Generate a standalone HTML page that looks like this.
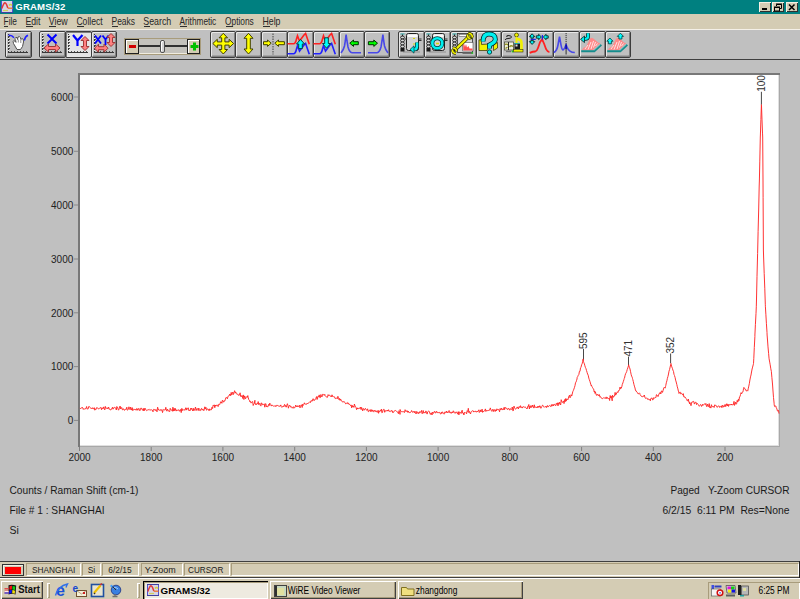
<!DOCTYPE html>
<html><head><meta charset="utf-8">
<style>
*{margin:0;padding:0;box-sizing:border-box}
html,body{width:800px;height:599px;overflow:hidden}
body{position:relative;background:#c0c0c0;font-family:"Liberation Sans",sans-serif;color:#000}
.a{position:absolute}
.t{position:absolute;white-space:pre;font-size:11px;line-height:11px}
#title{left:0;top:0;width:800px;height:14px;background:#008080}
#menu{left:0;top:14px;width:800px;height:15px;background:#d4ccb4}
#tbar{left:0;top:29px;width:800px;height:31px;background:#c0c0c0;border-top:1px solid #f4f0e8;border-bottom:1px solid #404040}
.btn{position:absolute;top:31px;width:27px;height:27px;border:1px solid #3c3c3c;border-radius:2px;background:#c0c0c0;box-shadow:inset 1px 1px 0 #e8e8e8,inset -1px -1px 0 #808080,inset 0 -2px 0 #a4a4a4}
.btn svg{position:absolute;left:0;top:0}
.btn.on{background:#e4e4e4;box-shadow:inset 1px 1px 0 #808080}
.tb{position:absolute;top:2px;width:12px;height:10px;background:#d4ccb4;box-shadow:inset 1px 1px 0 #f4f0e4,inset -1px -1px 0 #303030}
#status{left:0;top:561px;width:800px;height:17px;background:#d4ccb4;border-top:1px solid #404040;border-bottom:1px solid #404040}
.pan{position:absolute;top:1px;height:13px;border-top:1px solid #a89c7c;border-left:1px solid #a89c7c;border-bottom:1px solid #fff;border-right:1px solid #fff;font-size:11px;line-height:11px;text-align:center;color:#222}
#task{left:0;top:578px;width:800px;height:21px;background:#d4ccb4;border-top:1px solid #fff}
.tk{position:absolute;top:2px;height:18px;background:#d4ccb4;box-shadow:inset 1px 1px 0 #fff,inset -1px -1px 0 #404040,inset -2px -2px 0 #a89c7c;font-size:11px;line-height:11px}
</style></head><body>
<!-- title bar -->
<div class="a" id="title">
  <svg class="a" style="left:1px;top:1px" width="13" height="13" viewBox="0 0 13 13">
    <rect x="0" y="0" width="12" height="12" fill="#d8d4e4"/><path d="M0.5 0V12M11.5 0V12" stroke="#5050d0"/><path d="M0 11.5H12" stroke="#4040a0"/>
    <path d="M2 9.5H7" stroke="#d0d060" stroke-width="1.2"/><path d="M8 4.5 Q9.5 2.5 11 4.5" fill="none" stroke="#d8d040" stroke-width="1.6"/>
    <path d="M0.8 7.5 Q3 1 4.3 1.8 Q5.5 2.5 6.8 7" fill="none" stroke="#e03838" stroke-width="1.5"/><path d="M6.8 7.2 H11.5" stroke="#f07028" stroke-width="1.3"/>
  </svg>
  <svg class="a" style="left:0;top:0" width="100" height="14" font-family="Liberation Sans"><text x="15.3" y="10.2" font-size="9.6" font-weight="bold" fill="#fff" textLength="50" lengthAdjust="spacing">GRAMS/32</text></svg>
  <div class="tb" style="left:759px"><div class="a" style="left:3px;top:6px;width:5px;height:2px;background:#000"></div></div>
  <div class="tb" style="left:772px"><svg class="a" style="left:0;top:0" width="12" height="10"><path d="M4.5 4V2.5H9.5V6.5H8" fill="none" stroke="#000" stroke-width="1"/><path d="M4 2H10" stroke="#000" stroke-width="1"/><rect x="2.5" y="5.5" width="5" height="3.5" fill="none" stroke="#000" stroke-width="1"/><path d="M2 5H8" stroke="#000"/></svg></div>
  <div class="tb" style="left:786px"><svg class="a" style="left:0;top:0" width="12" height="10"><path d="M3 2.5L8.5 8M8.5 2.5L3 8" stroke="#000" stroke-width="1.5"/></svg></div>
</div>
<!-- menu -->
<div class="a" id="menu">
<svg class="a" style="left:0;top:0" width="800" height="15" font-family="Liberation Sans">
<text x="3.5999999999999996" y="11" font-size="10.5" text-anchor="start" fill="#262626" font-weight="normal" textLength="13.4" lengthAdjust="spacingAndGlyphs" xml:space="preserve" >File</text>
<rect x="4" y="12" width="4" height="1" fill="#303030"/>
<text x="25.4" y="11" font-size="10.5" text-anchor="start" fill="#262626" font-weight="normal" textLength="15" lengthAdjust="spacingAndGlyphs" xml:space="preserve" >Edit</text>
<rect x="26" y="12" width="7" height="1" fill="#303030"/>
<text x="48.7" y="11" font-size="10.5" text-anchor="start" fill="#262626" font-weight="normal" textLength="19" lengthAdjust="spacingAndGlyphs" xml:space="preserve" >View</text>
<rect x="49" y="12" width="7" height="1" fill="#303030"/>
<text x="76.4" y="11" font-size="10.5" text-anchor="start" fill="#262626" font-weight="normal" textLength="26.3" lengthAdjust="spacingAndGlyphs" xml:space="preserve" >Collect</text>
<rect x="77" y="12" width="7" height="1" fill="#303030"/>
<text x="111.5" y="11" font-size="10.5" text-anchor="start" fill="#262626" font-weight="normal" textLength="23.5" lengthAdjust="spacingAndGlyphs" xml:space="preserve" >Peaks</text>
<rect x="112" y="12" width="6" height="1" fill="#303030"/>
<text x="143.25" y="11" font-size="10.5" text-anchor="start" fill="#262626" font-weight="normal" textLength="28" lengthAdjust="spacingAndGlyphs" xml:space="preserve" >Search</text>
<rect x="144" y="12" width="6" height="1" fill="#303030"/>
<text x="179.5" y="11" font-size="10.5" text-anchor="start" fill="#262626" font-weight="normal" textLength="36.75" lengthAdjust="spacingAndGlyphs" xml:space="preserve" >Arithmetic</text>
<rect x="180" y="12" width="7" height="1" fill="#303030"/>
<text x="225.0" y="11" font-size="10.5" text-anchor="start" fill="#262626" font-weight="normal" textLength="28.75" lengthAdjust="spacingAndGlyphs" xml:space="preserve" >Options</text>
<rect x="226" y="12" width="7" height="1" fill="#303030"/>
<text x="262.5" y="11" font-size="10.5" text-anchor="start" fill="#262626" font-weight="normal" textLength="18" lengthAdjust="spacingAndGlyphs" xml:space="preserve" >Help</text>
<rect x="263" y="12" width="7" height="1" fill="#303030"/>
</svg>
</div>
<!-- toolbar -->
<div class="a" id="tbar"></div>
<div class="btn" style="left:5px;width:27px"><svg class="a" style="left:-1px;top:-1px" width="26" height="27" viewBox="0 0 26 27"><path d="M3.5 3V22M3 21.5H23" stroke="#383838" stroke-width="1"/><path d="M4 5.5h1M4 8.5h1M4 11.5h1M4 14.5h1M4 17.5h1" stroke="#505050" stroke-width="1"/><path d="M6.5 20v1M9.5 20v1M12.5 20v1M15.5 20v1M18.5 20v1M21.5 20v1" stroke="#505050" stroke-width="1"/><path d="M3.5 4V22" stroke="#f0f0f0" stroke-width="1" stroke-dasharray="1 2"/><path d="M3.5 4.3 Q7 4 9 6.8 M19.3 9.5 Q20 5.5 23 4.3" fill="none" stroke="#2020ff" stroke-width="1.5"/><path d="M8.5 12.5 Q7.5 10 9 9.5 L10.5 11 L10 7.5 Q10.5 6 12 6.5 L12.5 8.5 L13 6 Q14.5 5 15.5 6.5 L15.8 8.5 Q17 7 18.2 8 L18.5 11 L17.5 15.5 L15.5 18.5 L12 18.5 Z" fill="#fff" stroke="#505050" stroke-width="1"/><path d="M11 9.5V12M13.3 8.5V11.5M15.8 9V12" stroke="#707070" stroke-width="0.8"/></svg></div>
<div class="btn" style="left:39px;width:27px"><svg class="a" style="left:-1px;top:-1px" width="26" height="27" viewBox="0 0 26 27"><path d="M3.5 3V22M3 21.5H23" stroke="#383838" stroke-width="1"/><path d="M4 5.5h1M4 8.5h1M4 11.5h1M4 14.5h1M4 17.5h1" stroke="#505050" stroke-width="1"/><path d="M6.5 20v1M9.5 20v1M12.5 20v1M15.5 20v1M18.5 20v1M21.5 20v1" stroke="#505050" stroke-width="1"/><path d="M3.5 4V22" stroke="#f0f0f0" stroke-width="1" stroke-dasharray="1 2"/><path d="M8.5 3.5L17.5 12.5M17.5 3.5L8.5 12.5" stroke="#0000ff" stroke-width="2"/><polygon points="5.0,17.0 9.5,13.0 9.5,15.5 16.5,15.5 16.5,13.0 21.0,17.0 16.5,21.0 16.5,18.5 9.5,18.5 9.5,21.0" fill="#ff8080" stroke="#a03838" stroke-width="1" stroke-linejoin="miter"/></svg></div>
<div class="btn on" style="left:65px;width:27px"><svg class="a" style="left:-1px;top:-1px" width="26" height="27" viewBox="0 0 26 27"><path d="M3.5 3V22M3 21.5H23" stroke="#383838" stroke-width="1"/><path d="M4 5.5h1M4 8.5h1M4 11.5h1M4 14.5h1M4 17.5h1" stroke="#505050" stroke-width="1"/><path d="M6.5 20v1M9.5 20v1M12.5 20v1M15.5 20v1M18.5 20v1M21.5 20v1" stroke="#505050" stroke-width="1"/><path d="M3.5 4V22" stroke="#f0f0f0" stroke-width="1" stroke-dasharray="1 2"/><path d="M8 4L12.5 9.5L17.5 4M12.5 9.5V15" fill="none" stroke="#0000ff" stroke-width="2.2"/><polygon points="20.0,5.5 16.0,9.5 18.5,9.5 18.5,15.5 16.0,15.5 20.0,19.5 24.0,15.5 21.5,15.5 21.5,9.5 24.0,9.5" fill="#ff8080" stroke="#a03838" stroke-width="1"/></svg></div>
<div class="btn" style="left:91px;width:26px"><svg class="a" style="left:-1px;top:-1px" width="26" height="27" viewBox="0 0 26 27"><path d="M3.5 3V22M3 21.5H23" stroke="#383838" stroke-width="1"/><path d="M4 5.5h1M4 8.5h1M4 11.5h1M4 14.5h1M4 17.5h1" stroke="#505050" stroke-width="1"/><path d="M6.5 20v1M9.5 20v1M12.5 20v1M15.5 20v1M18.5 20v1M21.5 20v1" stroke="#505050" stroke-width="1"/><path d="M3.5 4V22" stroke="#f0f0f0" stroke-width="1" stroke-dasharray="1 2"/><path d="M4 4.5L10 12.5M10 4.5L4 12.5M11.5 4.5L14.5 8.5L17.5 4.5M14.5 8.5V14" fill="none" stroke="#0000ff" stroke-width="1.8"/><polygon points="20.0,2.5 16.0,6.5 18.5,6.5 18.5,11.5 16.0,11.5 20.0,15.5 24.0,11.5 21.5,11.5 21.5,6.5 24.0,6.5" fill="#ff8080" stroke="#a03838" stroke-width="1"/><polygon points="3.5,17.2 7.5,13.2 7.5,15.7 13.0,15.7 13.0,13.2 17.0,17.2 13.0,21.2 13.0,18.7 7.5,18.7 7.5,21.2" fill="#ff8080" stroke="#a03838" stroke-width="1" stroke-linejoin="miter"/></svg></div>
<div class="btn" style="left:210px;width:26px"><svg class="a" style="left:-1px;top:-1px" width="26" height="27" viewBox="0 0 26 27"><polygon points="13.3,2.3 17.5,6.8 14.9,6.8 14.9,10.9 19.1,10.9 19.1,8.3 23.6,12.5 19.1,16.7 19.1,14.1 14.9,14.1 14.9,18.5 17.5,18.5 13.3,23.0 9.1,18.5 11.7,18.5 11.7,14.1 7.3,14.1 7.3,16.7 2.8,12.5 7.3,8.3 7.3,10.9 11.7,10.9 11.7,6.8 9.1,6.8" fill="#ffff00" stroke="#404000" stroke-width="1"/></svg></div>
<div class="btn" style="left:235px;width:27px"><svg class="a" style="left:-1px;top:-1px" width="26" height="27" viewBox="0 0 26 27"><polygon points="13.5,2.3 9.0,7.3 11.7,7.3 11.7,18.0 9.0,18.0 13.5,23.0 18.0,18.0 15.3,18.0 15.3,7.3 18.0,7.3" fill="#ffff00" stroke="#404000" stroke-width="1"/></svg></div>
<div class="btn" style="left:261px;width:27px"><svg class="a" style="left:-1px;top:-1px" width="26" height="27" viewBox="0 0 26 27"><path d="M12 2.5V23.5" stroke="#404040" stroke-width="1" stroke-dasharray="1.5 1"/><polygon points="2.5,10.7 6.5,10.7 6.5,9.0 10.2,12.2 6.5,15.4 6.5,13.7 2.5,13.7" fill="#ffff00" stroke="#404000" stroke-width="1"/><polygon points="23.4,10.7 17.5,10.7 17.5,9.0 13.8,12.2 17.5,15.4 17.5,13.7 23.4,13.7" fill="#ffff00" stroke="#404000" stroke-width="1"/></svg></div>
<div class="btn" style="left:287px;width:27px"><svg class="a" style="left:-1px;top:-1px" width="26" height="27" viewBox="0 0 26 27"><path d="M0.5 12.8H6.5 Q8.5 12.8 9.5 8 L10.5 4.7 L12.5 10 L17 4 L18.6 2.4 L20.5 8 L22.3 13.2" fill="none" stroke="#ff2020" stroke-width="1.6"/><path d="M0.5 22.8H6.5 Q8.5 22.8 9.5 18 L10.5 14.7 L12.5 20 L17 14 L18.6 12.4 L20.5 18 L22.3 23.2" fill="none" stroke="#2020ff" stroke-width="1.6"/><polygon points="13.5,8.5 17.6,13.0 15.3,13.0 15.3,17.6 11.7,17.6 11.7,13.0 9.5,13.0" fill="#00ffff" stroke="#004040" stroke-width="1"/></svg></div>
<div class="btn" style="left:313px;width:27px"><svg class="a" style="left:-1px;top:-1px" width="26" height="27" viewBox="0 0 26 27"><path d="M0.5 12.8H6.5 Q8.5 12.8 9.5 8 L10.5 4.7 L12.5 10 L17 4 L18.6 2.4 L20.5 8 L22.3 13.2" fill="none" stroke="#ff2020" stroke-width="1.6"/><path d="M0.5 22.8H6.5 Q8.5 22.8 9.5 18 L10.5 14.7 L12.5 20 L17 14 L18.6 12.4 L20.5 18 L22.3 23.2" fill="none" stroke="#2020ff" stroke-width="1.6"/><polygon points="13.5,17.2 17.6,12.5 15.3,12.5 15.3,6.8 11.7,6.8 11.7,12.5 9.5,12.5" fill="#00ffff" stroke="#004040" stroke-width="1"/></svg></div>
<div class="btn" style="left:339px;width:26px"><svg class="a" style="left:-1px;top:-1px" width="26" height="27" viewBox="0 0 26 27"><path d="M2 22 Q4.5 19 5.5 15 L6.3 10 L7.1 3.7 L8 10 L9 16 Q10.5 21.5 13 21.8 H22" fill="none" stroke="#4848e8" stroke-width="1.6"/><polygon points="10.8,12.2 14.5,9.0 14.5,10.7 19.3,10.7 19.3,13.7 14.5,13.7 14.5,15.4" fill="#00ff00" stroke="#003000" stroke-width="1"/></svg></div>
<div class="btn" style="left:364px;width:26px"><svg class="a" style="left:-1px;top:-1px" width="26" height="27" viewBox="0 0 26 27"><path d="M24 22 Q21.5 19 20.5 15 L19.7 10 L18.9 3.7 L18 10 L17 16 Q15.5 21.5 13 21.8 H4" fill="none" stroke="#4848e8" stroke-width="1.6"/><polygon points="13.5,12.2 9.8,9.0 9.8,10.7 4.4,10.7 4.4,13.7 9.8,13.7 9.8,15.4" fill="#00ff00" stroke="#003000" stroke-width="1"/></svg></div>
<div class="btn" style="left:398px;width:27px"><svg class="a" style="left:-1px;top:-1px" width="26" height="27" viewBox="0 0 26 27"><rect x="5" y="20" width="17" height="2" fill="#a8a8a8"/><path d="M2.5 3h4" stroke="#40b0b0" stroke-width="1.2"/><path d="M4.5 3.5V20" stroke="#202020" stroke-width="1"/><ellipse cx="4.5" cy="6.5" rx="1.9" ry="1.4" fill="#d8d8d8" stroke="#202020" stroke-width="0.9"/><ellipse cx="4.5" cy="9.5" rx="1.9" ry="1.4" fill="#d8d8d8" stroke="#202020" stroke-width="0.9"/><ellipse cx="4.5" cy="12.5" rx="1.9" ry="1.4" fill="#d8d8d8" stroke="#202020" stroke-width="0.9"/><ellipse cx="4.5" cy="15.5" rx="1.9" ry="1.4" fill="#d8d8d8" stroke="#202020" stroke-width="0.9"/><rect x="2.5" y="17" width="4" height="3.5" fill="#181818"/><rect x="8.5" y="2.5" width="12" height="17" rx="2" fill="#d4d4d4" stroke="#202020"/><rect x="9.5" y="3.5" width="10" height="2.5" fill="#fafafa"/><path d="M6.5 8h2M20.5 8h3M20.5 9.5h3" stroke="#303030"/><path d="M15 7.5h2M15 13h2" stroke="#d8d800" stroke-width="1.2"/><path d="M19 11.5 V15.5 Q19 18.5 15.5 18.5" fill="none" stroke="#003838" stroke-width="3.8"/><path d="M19 11.5 V15.5 Q19 18.5 15.5 18.5" fill="none" stroke="#00f0f0" stroke-width="2.4"/><polygon points="12,18.5 16,14.8 16,22.2" fill="#00f0f0" stroke="#003838" stroke-width="0.7"/></svg></div>
<div class="btn" style="left:424px;width:27px"><svg class="a" style="left:-1px;top:-1px" width="26" height="27" viewBox="0 0 26 27"><rect x="5" y="20" width="17" height="2" fill="#a8a8a8"/><path d="M2.5 3h4" stroke="#40b0b0" stroke-width="1.2"/><path d="M4.5 3.5V20" stroke="#202020" stroke-width="1"/><ellipse cx="4.5" cy="6.5" rx="1.9" ry="1.4" fill="#d8d8d8" stroke="#202020" stroke-width="0.9"/><ellipse cx="4.5" cy="9.5" rx="1.9" ry="1.4" fill="#d8d8d8" stroke="#202020" stroke-width="0.9"/><ellipse cx="4.5" cy="12.5" rx="1.9" ry="1.4" fill="#d8d8d8" stroke="#202020" stroke-width="0.9"/><ellipse cx="4.5" cy="15.5" rx="1.9" ry="1.4" fill="#d8d8d8" stroke="#202020" stroke-width="0.9"/><rect x="2.5" y="17" width="4" height="3.5" fill="#181818"/><rect x="8.5" y="2.5" width="12" height="17" rx="2" fill="#d4d4d4" stroke="#202020"/><rect x="9.5" y="3.5" width="10" height="2.5" fill="#fafafa"/><path d="M6.5 8h2M20.5 8h3M20.5 9.5h3" stroke="#303030"/><circle cx="13.3" cy="12.3" r="5" fill="none" stroke="#003838" stroke-width="4"/><circle cx="13.3" cy="12.3" r="5" fill="none" stroke="#00f0f0" stroke-width="2.6"/><path d="M12 12.5h3" stroke="#d8d800" stroke-width="1.5"/></svg></div>
<div class="btn" style="left:450px;width:27px"><svg class="a" style="left:-1px;top:-1px" width="26" height="27" viewBox="0 0 26 27"><path d="M2.5 3h4" stroke="#40b0b0" stroke-width="1.2"/><path d="M4.5 3.5V20" stroke="#202020" stroke-width="1"/><ellipse cx="4.5" cy="6.5" rx="1.9" ry="1.4" fill="#d8d8d8" stroke="#202020" stroke-width="0.9"/><ellipse cx="4.5" cy="9.5" rx="1.9" ry="1.4" fill="#d8d8d8" stroke="#202020" stroke-width="0.9"/><ellipse cx="4.5" cy="12.5" rx="1.9" ry="1.4" fill="#d8d8d8" stroke="#202020" stroke-width="0.9"/><ellipse cx="4.5" cy="15.5" rx="1.9" ry="1.4" fill="#d8d8d8" stroke="#202020" stroke-width="0.9"/><rect x="2.5" y="17" width="4" height="3.5" fill="#181818"/><rect x="7.5" y="2.5" width="15" height="19" fill="#d8d8d8" stroke="#303030" stroke-width="0.8"/><rect x="9" y="3.5" width="9" height="2" fill="#fafafa" stroke="#404040" stroke-width="0.5"/><rect x="12.7" y="11.5" width="10.3" height="8.5" fill="#fff" stroke="#505050" stroke-width="0.6"/><path d="M13.2 19.5 V13.5 L14 12.5 L15 16 L16 13 L17 16.5 L18.5 15 L19.5 17.5 L22.5 17.5 V19.5 Z" fill="#ff5050"/><rect x="12.5" y="21.5" width="9.5" height="1.5" fill="#707070"/><circle cx="22.3" cy="22" r="0.9" fill="#20c020"/><path d="M5 19 L19.5 5" stroke="#3a3a00" stroke-width="3.6"/><path d="M5 19 L19.5 5" stroke="#f4f400" stroke-width="2.2"/><path d="M17.5 3.5 Q17.5 7.5 20.5 7.5 M19.5 2.5 L18 4 M21.8 6 L20.5 7.5 M18.5 2.5 Q22 2 22.5 6.5" fill="none" stroke="#3a3a00" stroke-width="2.8"/><path d="M17.5 3.5 Q17.5 7.5 20.5 7.5 M18.5 2.5 Q22 2 22.5 6.5" fill="none" stroke="#f4f400" stroke-width="1.6"/><path d="M3 17 Q6.5 17 6.5 20.5 M2.5 18.5 Q2 22 6 22.5" fill="none" stroke="#3a3a00" stroke-width="2.8"/><path d="M3 17 Q6.5 17 6.5 20.5 M2.5 18.5 Q2 22 6 22.5" fill="none" stroke="#f4f400" stroke-width="1.6"/></svg></div>
<div class="btn" style="left:476px;width:26px"><svg class="a" style="left:-1px;top:-1px" width="26" height="27" viewBox="0 0 26 27"><polygon points="3,9 5.5,8.5 5.5,13.5 13,13 11,19.5 3,19.5" fill="#f0f000" stroke="#303000" stroke-width="0.7"/><polygon points="17.5,14 21.5,11.5 21.5,17 17.5,19.5" fill="#f0f000" stroke="#303000" stroke-width="0.7"/><path d="M7 10.5 Q7 3 13 3 Q19.5 3 19.3 8.5 Q19 11.5 13.5 14 V17.5" fill="none" stroke="#002828" stroke-width="5"/><path d="M7 10.5 Q7 3 13 3 Q19.5 3 19.3 8.5 Q19 11.5 13.5 14 V17.5" fill="none" stroke="#00f0f0" stroke-width="3.4"/><circle cx="13.5" cy="21" r="2.2" fill="#00f0f0" stroke="#002828" stroke-width="0.8"/></svg></div>
<div class="btn" style="left:501px;width:27px"><svg class="a" style="left:-1px;top:-1px" width="26" height="27" viewBox="0 0 26 27"><path d="M6 6 Q5 4.5 7 4.5 Q10.5 4.5 10.5 6 Q10.5 7.5 7 7.5 Q4.5 7.5 4 9" fill="none" stroke="#202020" stroke-width="1"/><rect x="3.5" y="11" width="9" height="8" fill="#f0f0e0" stroke="#505040" stroke-width="0.8"/><path d="M4 13.5 Q6 12.5 7 14 M8.5 16 Q10 14 12 15.5 M4.5 17.5 L6.5 16" stroke="#909020" stroke-width="1.4" fill="none"/><path d="M7.5 11V19" stroke="#202020" stroke-width="1"/><rect x="5" y="20" width="5" height="1.2" fill="#707070"/><circle cx="15.5" cy="4" r="2" fill="#f0f000" stroke="#303000" stroke-width="0.7"/><path d="M15.5 6 V12" stroke="#f0f000" stroke-width="2"/><path d="M15.5 8 Q20.5 8 20.5 12 V19" fill="none" stroke="#f0f000" stroke-width="2.6"/><rect x="13.5" y="12.5" width="5.5" height="5.5" fill="#181818"/><rect x="14.5" y="13.5" width="2" height="2" fill="#e0e0e0"/><path d="M13 12.5h6" stroke="#20a0a0" stroke-width="1"/><rect x="12.5" y="18.5" width="9.5" height="2.5" fill="#f0f000" stroke="#303000" stroke-width="0.6"/><circle cx="11.5" cy="20.5" r="0.9" fill="#20c020"/></svg></div>
<div class="btn" style="left:527px;width:27px"><svg class="a" style="left:-1px;top:-1px" width="26" height="27" viewBox="0 0 26 27"><path d="M2.7 21.9 Q6 20.5 8.3 20.5 Q10 20 11.1 16.8 L13 11.1 L15.1 8.3 L17.2 13 L19.1 18.2 Q20.5 21 22.4 21" fill="none" stroke="#ff2020" stroke-width="1.8"/><path d="M15.4 4V8.5M3.7 8.3H8.8" stroke="#2020f0" stroke-width="1.3"/><polygon points="5.1,2.8 7.8,5.6 6.3,5.6 6.3,7.2 3.9,7.2 3.9,5.6 2.4,5.6" fill="#00f0f0" stroke="#002828" stroke-width="0.9"/><polygon points="5.1,13.4 7.8,10.6 6.3,10.6 6.3,9.4 3.9,9.4 3.9,10.6 2.4,10.6" fill="#00f0f0" stroke="#002828" stroke-width="0.9"/><polygon points="14.4,6.0 11.6,3.3 11.6,4.8 9.3,4.8 9.3,7.2 11.6,7.2 11.6,8.7" fill="#00f0f0" stroke="#002828" stroke-width="0.9"/><polygon points="16.3,6.0 19.1,3.3 19.1,4.8 21.2,4.8 21.2,7.2 19.1,7.2 19.1,8.7" fill="#00f0f0" stroke="#002828" stroke-width="0.9"/></svg></div>
<div class="btn" style="left:553px;width:27px"><svg class="a" style="left:-1px;top:-1px" width="26" height="27" viewBox="0 0 26 27"><path d="M13.1 2V13" stroke="#303030" stroke-width="1" stroke-dasharray="1.2 0.8"/><path d="M13.1 13V23.5" stroke="#303030" stroke-width="1"/><path d="M0.8 21.5 Q4 20 5 14 L6.5 5.7 L8 14 Q9 19 10 19 Q11.5 18.5 12.5 15 L13.1 13.9 L14 16 Q16 21.5 21.8 21.5" fill="none" stroke="#4848e8" stroke-width="1.6"/><path d="M13.1 13.5V18" stroke="#0000a0" stroke-width="1.4"/></svg></div>
<div class="btn" style="left:579px;width:27px"><svg class="a" style="left:-1px;top:-1px" width="26" height="27" viewBox="0 0 26 27"><polygon points="2.5,18.8 5,16.5 7,15.5 9,12 11,7.5 13,6.8 15,8 17,9.7 19,11.5 21.5,12.5 19,14 16,17 14,19" fill="#ff8a8a"/><path d="M6 18 L9 14 M9 18.5 L12 11 M12 18 L14.5 10 M14.5 16.5 L16.5 11 M16.5 15 L18.5 12.5" stroke="#ffe4e4" stroke-width="1"/><path d="M2.2 20.3H15.3L22.3 13.8" fill="none" stroke="#168c8c" stroke-width="2"/><path d="M15 19.3 L21.5 13.3" stroke="#80d0d0" stroke-width="0.7"/><path d="M9 2.3 V5.5 Q9 7.9 6 7.9 H5" fill="none" stroke="#002828" stroke-width="3.8"/><path d="M9 2.3 V5.5 Q9 7.9 6 7.9 H5" fill="none" stroke="#00f0f0" stroke-width="2.4"/><polygon points="1.5,8.3 5.5,5 5.5,11.6" fill="#00f0f0" stroke="#002828" stroke-width="0.8"/></svg></div>
<div class="btn" style="left:605px;width:26px"><svg class="a" style="left:-1px;top:-1px" width="26" height="27" viewBox="0 0 26 27"><polygon points="2.5,18.8 5,16.5 7,15.5 9,12 11,7.5 13,6.8 15,8 17,9.7 19,11.5 21.5,12.5 19,14 16,17 14,19" fill="#ff8a8a"/><path d="M6 18 L9 14 M9 18.5 L12 11 M12 18 L14.5 10 M14.5 16.5 L16.5 11 M16.5 15 L18.5 12.5" stroke="#ffe4e4" stroke-width="1"/><path d="M2.2 20.3H15.3L22.3 13.8" fill="none" stroke="#168c8c" stroke-width="2"/><path d="M15 19.3 L21.5 13.3" stroke="#80d0d0" stroke-width="0.7"/><polygon points="4.9,7.0 8.0,10.2 6.4,10.2 6.4,12.8 3.4,12.8 3.4,10.2 1.8,10.2" fill="#00ffff" stroke="#004040" stroke-width="0.8"/><polygon points="15.4,2.2 18.5,5.4 16.9,5.4 16.9,8.0 13.9,8.0 13.9,5.4 12.3,5.4" fill="#00ffff" stroke="#004040" stroke-width="0.8"/></svg></div>
<div class="a" style="left:124px;top:38px;width:77px;height:17px;background:#c4c2bc;border:1px solid #a89c7c;box-shadow:inset -1px -1px 0 #f0ece0">
<div class="a" style="left:0;top:0;width:14px;height:15px;background:#d4ccb4;border:1px solid #202020;border-right-color:#202020;box-shadow:inset 1px 1px 0 #fff"><div class="a" style="left:3px;top:5px;width:7px;height:3px;background:#d00000"></div></div>
<div class="a" style="left:14px;top:6px;width:48px;height:2px;background:#303030"></div>
<div class="a" style="left:35px;top:1px;width:5px;height:13px;background:#d4d4d4;border:1px solid #505050;border-radius:2px;box-shadow:inset 1px 1px 0 #fff"></div>
<div class="a" style="left:62px;top:0;width:13px;height:15px;background:#d4ccb4;border:1px solid #202020;box-shadow:inset 1px 1px 0 #fff"><svg class="a" style="left:2px;top:2px" width="9" height="9"><path d="M4.5 0.5V8.5M0.5 4.5H8.5" stroke="#00c000" stroke-width="3"/></svg></div>
</div>
<!-- plot -->
<svg class="a" style="left:0;top:0" width="800" height="599" viewBox="0 0 800 599" font-family="Liberation Sans" >
  <rect x="78" y="73" width="702" height="374" fill="#787878"/>
  <rect x="80" y="75" width="700" height="372" fill="#a8a8a8"/>
  <rect x="80" y="75" width="699" height="371" fill="#e0e0e0"/>
  <rect x="80" y="75" width="698" height="370" fill="#fff"/>
  <rect x="74" y="96.5" width="4" height="1" fill="#8a8a8a"/>
<text x="73.3" y="100.7" font-size="10" text-anchor="end" fill="#222" font-weight="normal" xml:space="preserve" >6000</text>
<rect x="74" y="150.8" width="4" height="1" fill="#8a8a8a"/>
<text x="73.3" y="155.0" font-size="10" text-anchor="end" fill="#222" font-weight="normal" xml:space="preserve" >5000</text>
<rect x="74" y="204.5" width="4" height="1" fill="#8a8a8a"/>
<text x="73.3" y="208.7" font-size="10" text-anchor="end" fill="#222" font-weight="normal" xml:space="preserve" >4000</text>
<rect x="74" y="258.5" width="4" height="1" fill="#8a8a8a"/>
<text x="73.3" y="262.7" font-size="10" text-anchor="end" fill="#222" font-weight="normal" xml:space="preserve" >3000</text>
<rect x="74" y="312.3" width="4" height="1" fill="#8a8a8a"/>
<text x="73.3" y="316.5" font-size="10" text-anchor="end" fill="#222" font-weight="normal" xml:space="preserve" >2000</text>
<rect x="74" y="366.1" width="4" height="1" fill="#8a8a8a"/>
<text x="73.3" y="370.3" font-size="10" text-anchor="end" fill="#222" font-weight="normal" xml:space="preserve" >1000</text>
<rect x="74" y="419.9" width="4" height="1" fill="#8a8a8a"/>
<text x="73.3" y="424.1" font-size="10" text-anchor="end" fill="#222" font-weight="normal" xml:space="preserve" >0</text>
<rect x="79.0" y="447" width="1" height="4" fill="#808080"/>
<text x="79.5" y="461.3" font-size="10" text-anchor="middle" fill="#222" font-weight="normal" xml:space="preserve" >2000</text>
<rect x="150.7" y="447" width="1" height="4" fill="#808080"/>
<text x="151.2" y="461.3" font-size="10" text-anchor="middle" fill="#222" font-weight="normal" xml:space="preserve" >1800</text>
<rect x="222.4" y="447" width="1" height="4" fill="#808080"/>
<text x="222.9" y="461.3" font-size="10" text-anchor="middle" fill="#222" font-weight="normal" xml:space="preserve" >1600</text>
<rect x="294.2" y="447" width="1" height="4" fill="#808080"/>
<text x="294.7" y="461.3" font-size="10" text-anchor="middle" fill="#222" font-weight="normal" xml:space="preserve" >1400</text>
<rect x="365.9" y="447" width="1" height="4" fill="#808080"/>
<text x="366.4" y="461.3" font-size="10" text-anchor="middle" fill="#222" font-weight="normal" xml:space="preserve" >1200</text>
<rect x="437.6" y="447" width="1" height="4" fill="#808080"/>
<text x="438.1" y="461.3" font-size="10" text-anchor="middle" fill="#222" font-weight="normal" xml:space="preserve" >1000</text>
<rect x="509.3" y="447" width="1" height="4" fill="#808080"/>
<text x="509.8" y="461.3" font-size="10" text-anchor="middle" fill="#222" font-weight="normal" xml:space="preserve" >800</text>
<rect x="581.1" y="447" width="1" height="4" fill="#808080"/>
<text x="581.6" y="461.3" font-size="10" text-anchor="middle" fill="#222" font-weight="normal" xml:space="preserve" >600</text>
<rect x="652.8" y="447" width="1" height="4" fill="#808080"/>
<text x="653.3" y="461.3" font-size="10" text-anchor="middle" fill="#222" font-weight="normal" xml:space="preserve" >400</text>
<rect x="724.5" y="447" width="1" height="4" fill="#808080"/>
<text x="725.0" y="461.3" font-size="10" text-anchor="middle" fill="#222" font-weight="normal" xml:space="preserve" >200</text>
<rect x="583.0" y="349" width="1" height="11.4" fill="#484848"/>
<text x="0" y="0" font-size="10" fill="#303030" transform="translate(587.2,349) rotate(-90)">595</text>
<rect x="628.0" y="356.6" width="1" height="8.7" fill="#484848"/>
<text x="0" y="0" font-size="10" fill="#303030" transform="translate(632.2,356.6) rotate(-90)">471</text>
<rect x="670.1" y="353.5" width="1" height="9.8" fill="#484848"/>
<text x="0" y="0" font-size="10" fill="#303030" transform="translate(674.3000000000001,353.5) rotate(-90)">352</text>
<rect x="760.9" y="91.8" width="1" height="13.0" fill="#484848"/>
<text x="0" y="0" font-size="10" fill="#303030" transform="translate(765.1,91.8) rotate(-90)">100</text>
  <path d="M80.0,407.9 L80.5,408.7 L81.1,408.0 L81.7,407.9 L82.2,407.2 L82.8,408.0 L83.3,409.4 L83.8,408.7 L84.4,409.3 L85.0,408.5 L85.5,408.7 L86.0,408.5 L86.6,406.5 L87.2,409.2 L87.7,408.8 L88.2,408.8 L88.8,406.5 L89.3,406.5 L89.9,407.4 L90.5,407.8 L91.0,408.6 L91.5,408.3 L92.1,408.9 L92.7,407.7 L93.2,408.7 L93.8,408.8 L94.3,407.7 L94.8,410.2 L95.4,409.0 L96.0,409.6 L96.5,407.7 L97.0,407.6 L97.6,408.0 L98.2,408.3 L98.7,409.1 L99.2,408.7 L99.8,408.0 L100.3,407.4 L100.9,407.9 L101.5,409.7 L102.0,407.6 L102.5,408.7 L103.1,408.9 L103.7,406.9 L104.2,408.5 L104.8,409.9 L105.3,406.4 L105.8,408.2 L106.4,408.4 L107.0,407.7 L107.5,409.0 L108.0,408.5 L108.6,407.0 L109.2,409.4 L109.7,409.2 L110.2,409.5 L110.8,410.1 L111.3,408.9 L111.9,408.7 L112.5,407.2 L113.0,409.2 L113.5,407.9 L114.1,408.1 L114.7,407.3 L115.2,407.6 L115.8,408.1 L116.3,410.0 L116.8,406.5 L117.4,407.1 L118.0,408.9 L118.5,410.2 L119.0,409.3 L119.6,406.7 L120.2,406.0 L120.7,409.0 L121.2,407.9 L121.8,407.5 L122.3,409.7 L122.9,409.9 L123.0,408.9 L123.5,409.0 L124.0,409.2 L124.5,410.4 L125.1,409.4 L125.7,409.3 L126.2,409.4 L126.8,407.2 L127.3,410.2 L127.8,409.9 L128.4,409.4 L128.9,406.8 L129.5,408.3 L130.1,409.8 L130.6,407.1 L131.2,408.8 L131.7,410.1 L132.2,407.6 L132.8,410.7 L133.3,409.6 L133.9,408.9 L134.4,409.4 L135.0,409.8 L135.6,409.2 L136.1,410.3 L136.7,408.5 L137.2,408.7 L137.8,410.3 L138.3,409.2 L138.8,408.3 L139.4,410.2 L139.9,410.8 L140.5,408.8 L141.1,407.9 L141.6,409.2 L142.2,409.2 L142.7,409.0 L143.2,410.9 L143.8,408.3 L144.3,410.7 L144.9,408.1 L145.4,408.6 L146.0,410.1 L146.6,410.7 L147.1,410.4 L147.7,409.9 L148.2,409.7 L148.8,409.7 L149.3,410.2 L149.8,409.4 L150.4,409.9 L150.9,410.2 L151.5,409.7 L152.1,410.5 L152.6,410.3 L153.0,411.8 L153.2,410.0 L153.7,409.3 L154.2,409.4 L154.8,409.7 L155.3,410.7 L155.9,409.4 L156.4,410.2 L157.0,411.8 L157.6,407.2 L158.1,408.7 L158.7,410.1 L159.2,410.3 L159.8,410.2 L160.3,409.5 L160.8,410.6 L161.4,410.3 L161.9,409.5 L162.5,412.6 L163.1,410.4 L163.6,409.5 L164.2,410.0 L164.7,409.9 L165.2,410.0 L165.8,407.3 L166.3,409.6 L166.9,411.2 L167.4,409.0 L168.0,410.1 L168.6,411.2 L169.1,411.1 L169.7,411.7 L170.2,408.3 L170.8,409.7 L171.3,409.7 L171.8,410.7 L172.4,411.2 L172.9,407.2 L173.5,411.1 L174.1,408.4 L174.6,410.7 L175.2,408.3 L175.7,410.1 L176.2,411.1 L176.8,409.7 L177.3,410.0 L177.9,410.6 L178.4,409.9 L179.0,409.7 L179.6,411.3 L180.1,410.8 L180.7,409.4 L181.2,412.6 L181.8,408.4 L182.3,410.6 L182.8,409.3 L183.4,409.7 L183.9,410.3 L184.5,409.8 L185.1,410.2 L185.6,407.9 L186.2,407.9 L186.7,410.1 L187.2,408.4 L187.8,408.3 L188.3,407.8 L188.9,410.7 L189.4,410.1 L190.0,410.9 L190.6,408.3 L191.1,409.3 L191.7,408.1 L192.2,410.0 L192.8,410.9 L193.3,408.3 L193.8,410.8 L194.4,410.2 L194.9,408.9 L195.5,407.0 L196.1,410.6 L196.6,409.0 L197.2,408.4 L197.7,409.4 L198.0,409.4 L198.2,410.6 L198.8,408.0 L199.3,410.2 L199.9,410.6 L200.4,410.6 L201.0,408.9 L201.6,408.4 L202.1,410.2 L202.7,409.3 L203.2,409.3 L203.8,410.7 L204.3,409.0 L204.8,406.8 L205.4,408.9 L205.9,407.3 L206.5,410.2 L207.1,409.7 L207.6,408.7 L208.2,409.4 L208.7,410.3 L208.8,409.5 L209.2,410.6 L209.8,408.8 L210.3,409.7 L210.9,410.0 L211.4,409.8 L212.0,407.2 L212.6,408.5 L213.1,405.4 L213.7,406.0 L214.2,404.8 L214.8,407.7 L215.3,405.0 L215.8,406.1 L216.0,405.8 L216.4,405.7 L216.9,404.8 L217.5,405.3 L218.1,406.6 L218.6,404.4 L219.2,404.5 L219.7,404.7 L220.2,403.1 L220.8,401.6 L221.3,402.0 L221.9,403.3 L222.4,400.1 L223.0,400.9 L223.6,402.2 L223.8,401.8 L224.1,400.7 L224.7,401.1 L225.2,399.9 L225.8,398.0 L226.3,397.2 L226.8,397.7 L227.4,398.8 L227.9,396.8 L228.5,395.9 L229.1,395.6 L229.6,394.3 L230.0,395.5 L230.2,394.3 L230.7,395.6 L231.2,392.4 L231.8,394.9 L232.3,393.6 L232.9,392.0 L233.4,394.5 L234.0,393.1 L234.6,390.7 L235.1,391.9 L235.6,392.8 L235.7,392.0 L236.2,393.7 L236.8,393.9 L237.3,394.1 L237.8,394.1 L238.4,395.4 L238.9,395.0 L239.5,395.1 L240.1,392.8 L240.6,396.2 L241.2,396.9 L241.7,395.6 L242.2,395.7 L242.8,398.5 L243.3,394.9 L243.8,397.5 L243.9,399.5 L244.4,395.9 L245.0,397.6 L245.6,398.8 L246.1,396.6 L246.7,397.2 L247.2,397.5 L247.8,395.6 L248.0,396.4 L248.3,397.6 L248.8,399.7 L249.4,400.3 L249.9,401.7 L250.0,400.9 L250.5,401.7 L251.1,403.1 L251.6,402.4 L252.2,401.5 L252.7,401.7 L253.2,405.5 L253.8,404.0 L254.3,403.5 L254.9,400.3 L255.0,403.7 L255.4,403.6 L256.0,405.0 L256.6,403.8 L257.1,403.3 L257.6,404.1 L258.2,401.6 L258.8,404.8 L259.3,404.2 L259.9,403.2 L260.4,405.5 L260.9,406.1 L261.5,402.8 L262.1,403.7 L262.6,404.8 L263.1,404.8 L263.7,404.3 L264.2,403.8 L264.8,407.2 L265.0,406.1 L265.4,403.8 L265.9,403.7 L266.4,406.9 L267.0,406.2 L267.6,407.1 L268.1,406.1 L268.6,404.4 L269.2,405.6 L269.8,403.1 L270.3,404.6 L270.9,405.4 L271.4,406.1 L271.9,404.8 L272.5,405.5 L273.1,406.1 L273.6,406.1 L274.1,406.4 L274.7,406.0 L275.2,405.5 L275.8,406.7 L276.4,406.0 L276.9,405.1 L277.4,405.3 L278.0,406.0 L278.6,406.0 L279.1,406.3 L279.6,406.2 L280.0,406.4 L280.2,406.1 L280.8,404.9 L281.3,406.7 L281.9,407.4 L282.4,406.7 L282.9,406.1 L283.5,406.8 L284.1,405.3 L284.6,404.4 L285.1,406.5 L285.7,405.4 L286.2,407.2 L286.8,405.3 L287.4,403.7 L287.9,405.4 L288.4,408.2 L289.0,406.1 L289.6,405.1 L290.1,405.8 L290.6,407.1 L291.2,407.1 L291.8,406.8 L292.3,408.2 L292.9,407.4 L293.4,406.7 L293.5,407.3 L293.9,408.3 L294.5,407.5 L295.1,407.4 L295.6,405.1 L296.1,406.0 L296.7,406.8 L297.2,405.6 L297.8,406.9 L298.4,406.2 L298.9,406.5 L299.4,405.2 L300.0,407.9 L300.6,406.4 L301.1,404.8 L301.6,405.0 L302.2,407.5 L302.5,404.3 L302.8,405.5 L303.3,405.4 L303.9,404.2 L304.4,402.8 L304.9,404.0 L305.5,404.0 L306.1,404.6 L306.6,404.1 L307.1,403.1 L307.7,403.8 L308.2,403.2 L308.8,402.7 L309.4,402.3 L309.9,401.8 L310.4,402.6 L311.0,400.6 L311.6,400.9 L312.1,401.3 L312.6,399.6 L313.0,400.5 L313.2,398.7 L313.8,399.6 L314.3,400.5 L314.9,400.0 L315.4,398.9 L315.9,398.3 L316.5,396.6 L317.1,399.5 L317.5,397.7 L317.6,398.3 L318.1,396.1 L318.7,396.8 L319.2,394.9 L319.8,397.6 L320.4,397.6 L320.9,394.5 L321.4,396.4 L322.0,397.0 L322.6,394.3 L323.1,394.2 L323.6,394.9 L324.2,395.2 L324.8,394.3 L325.0,395.7 L325.3,396.0 L325.9,396.5 L326.4,396.6 L326.9,397.5 L327.5,397.2 L328.1,394.6 L328.6,395.6 L329.1,395.0 L329.7,395.1 L330.2,396.2 L330.8,396.3 L331.4,396.9 L331.9,394.8 L332.4,395.2 L332.5,396.5 L333.0,396.5 L333.6,396.7 L334.1,397.2 L334.6,396.8 L335.2,398.6 L335.8,398.5 L336.3,398.3 L336.9,397.9 L337.4,398.7 L337.9,396.3 L338.5,398.4 L339.1,399.8 L339.6,398.4 L340.0,400.4 L340.1,400.4 L340.7,399.1 L341.2,400.6 L341.8,400.8 L342.4,401.9 L342.9,402.3 L343.4,401.9 L344.0,401.3 L344.6,402.4 L345.1,402.7 L345.6,403.8 L346.2,403.7 L346.8,402.9 L347.3,402.5 L347.5,403.6 L347.9,403.3 L348.4,403.1 L348.9,404.4 L349.5,404.2 L350.1,405.0 L350.6,405.6 L351.1,404.9 L351.7,407.9 L352.2,405.3 L352.8,407.0 L353.4,406.2 L353.9,407.4 L354.4,404.0 L355.0,405.9 L355.6,407.1 L356.1,407.7 L356.6,409.7 L357.2,407.8 L357.8,409.0 L358.0,408.5 L358.3,408.8 L358.9,408.4 L359.4,407.8 L359.9,408.6 L360.5,407.1 L361.1,409.6 L361.6,407.4 L362.1,408.8 L362.7,410.9 L363.2,408.5 L363.8,408.9 L364.4,410.2 L364.9,409.1 L365.4,408.3 L366.0,409.6 L366.6,410.0 L367.1,410.3 L367.6,408.8 L368.2,411.6 L368.8,411.6 L369.3,410.0 L369.9,410.4 L370.4,409.7 L370.9,411.8 L371.5,409.7 L372.1,411.2 L372.6,410.1 L373.0,410.0 L373.1,411.5 L373.7,412.1 L374.2,410.7 L374.8,410.0 L375.4,411.6 L375.9,410.7 L376.4,411.1 L377.0,412.4 L377.6,412.0 L378.1,410.3 L378.6,413.3 L379.2,410.9 L379.8,411.7 L380.3,410.2 L380.9,410.9 L381.4,409.1 L381.9,412.8 L382.5,412.4 L383.1,409.7 L383.6,409.4 L384.1,409.3 L384.7,412.3 L385.2,410.6 L385.8,411.0 L386.4,410.8 L386.9,411.0 L387.4,410.0 L388.0,411.2 L388.6,409.7 L389.1,411.1 L389.6,411.5 L390.2,411.7 L390.8,411.0 L391.3,410.3 L391.9,411.4 L392.4,410.8 L392.9,412.9 L393.5,412.1 L394.1,411.2 L394.6,410.8 L395.1,410.6 L395.7,410.4 L396.2,411.0 L396.8,411.7 L397.4,412.0 L397.9,412.0 L398.4,413.7 L399.0,410.7 L399.6,411.5 L400.0,414.4 L400.1,409.5 L400.6,411.0 L401.2,411.7 L401.8,411.7 L402.3,412.0 L402.9,411.4 L403.4,412.0 L403.9,411.7 L404.5,412.5 L405.1,409.7 L405.6,410.8 L406.1,411.7 L406.7,410.7 L407.2,410.7 L407.8,412.4 L408.4,411.1 L408.9,412.5 L409.4,412.6 L410.0,412.2 L410.6,412.4 L411.1,411.8 L411.6,410.5 L412.2,411.9 L412.8,412.4 L413.3,411.4 L413.9,411.9 L414.4,412.8 L414.9,411.1 L415.5,412.7 L416.1,414.0 L416.6,411.5 L417.1,412.3 L417.7,412.0 L418.2,413.8 L418.8,412.5 L419.4,413.2 L419.9,411.5 L420.4,412.2 L421.0,412.3 L421.6,410.4 L422.1,413.8 L422.6,413.3 L423.2,410.5 L423.8,413.2 L424.3,412.3 L424.9,412.9 L425.4,412.8 L425.9,410.9 L426.5,412.3 L427.1,414.1 L427.6,411.9 L428.1,411.5 L428.7,411.1 L429.2,411.3 L429.8,413.0 L430.4,414.4 L430.9,413.1 L431.4,412.9 L432.0,415.0 L432.5,412.2 L432.6,412.0 L433.1,413.2 L433.6,413.3 L434.2,411.6 L434.8,411.4 L435.3,413.0 L435.9,412.9 L436.4,411.3 L436.9,412.4 L437.5,412.1 L438.1,413.1 L438.6,412.5 L439.1,412.5 L439.7,412.3 L440.2,413.7 L440.8,414.1 L441.4,412.2 L441.9,413.5 L442.4,411.8 L443.0,412.7 L443.6,413.4 L444.1,414.2 L444.6,412.2 L445.2,412.5 L445.8,412.8 L446.3,411.0 L446.9,412.6 L447.4,411.8 L447.9,412.9 L448.5,411.4 L449.1,410.5 L449.6,412.6 L450.1,412.8 L450.7,411.9 L451.2,413.4 L451.8,412.2 L452.4,411.9 L452.9,413.0 L453.4,410.8 L454.0,411.8 L454.6,412.5 L455.1,413.4 L455.6,412.3 L456.2,412.8 L456.8,411.8 L457.3,412.8 L457.9,414.2 L458.4,411.7 L458.9,414.9 L459.5,411.8 L460.1,412.4 L460.6,412.6 L461.1,413.5 L461.7,411.1 L462.2,410.2 L462.5,413.0 L462.8,413.2 L463.4,413.0 L463.9,415.0 L464.4,412.5 L465.0,412.5 L465.6,413.1 L466.1,412.5 L466.6,413.8 L467.2,410.7 L467.8,411.6 L468.3,408.3 L468.9,412.7 L469.4,411.4 L469.9,412.8 L470.5,414.0 L471.1,411.7 L471.6,411.4 L472.1,411.1 L472.7,410.7 L473.2,410.8 L473.8,412.1 L474.4,411.5 L474.9,411.4 L475.4,411.1 L476.0,412.2 L476.6,411.8 L477.1,411.0 L477.6,411.8 L478.2,410.9 L478.8,409.8 L479.3,412.5 L479.9,411.5 L480.4,409.9 L480.9,412.0 L481.5,411.2 L482.1,409.1 L482.6,412.4 L483.1,411.0 L483.7,411.6 L484.2,410.8 L484.8,410.4 L485.4,408.9 L485.9,411.5 L486.4,410.5 L487.0,410.1 L487.6,410.7 L488.1,410.4 L488.6,410.9 L489.2,409.8 L489.8,410.1 L490.3,407.9 L490.9,409.6 L491.4,410.7 L491.9,411.4 L492.5,409.5 L493.1,409.7 L493.6,411.5 L494.1,409.4 L494.7,410.5 L495.2,411.5 L495.8,409.7 L496.4,410.9 L496.9,408.8 L497.4,409.7 L498.0,409.4 L498.6,409.5 L499.1,410.6 L499.6,411.8 L500.0,408.6 L500.2,408.7 L500.8,409.8 L501.3,408.1 L501.9,409.7 L502.4,409.7 L502.9,408.8 L503.5,409.6 L504.1,407.4 L504.6,409.7 L505.1,407.3 L505.7,408.1 L506.2,408.2 L506.8,408.4 L507.4,409.6 L507.9,408.8 L508.4,408.2 L509.0,409.2 L509.6,410.2 L510.1,408.5 L510.6,408.9 L511.2,409.7 L511.8,408.7 L512.3,407.0 L512.9,410.9 L513.4,410.6 L514.0,406.1 L514.5,408.1 L515.0,408.6 L515.6,409.1 L516.1,408.8 L516.7,407.7 L517.2,406.9 L517.8,408.0 L518.4,409.0 L518.9,406.7 L519.5,406.7 L520.0,407.7 L520.5,405.7 L521.1,407.4 L521.6,407.2 L522.2,408.1 L522.8,406.8 L523.3,406.6 L523.9,407.1 L524.4,407.4 L525.0,406.7 L525.5,407.4 L526.0,408.1 L526.6,408.5 L527.1,409.0 L527.7,406.4 L528.2,406.7 L528.8,404.5 L529.4,409.0 L529.9,406.2 L530.0,407.0 L530.5,407.5 L531.0,405.5 L531.5,407.4 L532.1,406.9 L532.6,405.0 L533.2,407.2 L533.8,408.1 L534.3,404.8 L534.9,407.6 L535.4,407.0 L536.0,407.2 L536.5,407.2 L537.0,408.0 L537.6,406.4 L538.1,407.5 L538.7,406.2 L539.2,407.3 L539.8,405.7 L540.4,406.4 L540.9,408.3 L541.5,406.9 L542.0,406.3 L542.5,405.2 L543.1,405.5 L543.6,406.6 L544.2,407.3 L544.8,406.7 L545.3,406.8 L545.9,406.2 L546.4,407.6 L547.0,405.8 L547.5,405.6 L548.0,407.1 L548.6,406.2 L549.1,405.8 L549.7,405.5 L550.2,405.8 L550.8,406.7 L551.0,406.4 L551.4,404.6 L551.9,406.1 L552.5,405.7 L553.0,404.2 L553.5,405.9 L554.1,404.6 L554.6,404.3 L555.2,405.3 L555.8,405.7 L556.3,403.4 L556.9,404.4 L557.4,402.8 L558.0,405.9 L558.5,402.8 L559.0,404.4 L559.6,402.2 L560.1,403.6 L560.7,404.9 L561.2,399.7 L561.8,401.7 L562.4,402.5 L562.9,401.7 L563.5,400.9 L564.0,403.6 L564.5,401.2 L565.0,399.3 L565.1,401.8 L565.6,398.6 L566.2,401.1 L566.8,398.8 L567.3,399.1 L567.9,399.8 L568.4,398.1 L569.0,396.0 L569.5,395.2 L570.0,397.8 L570.6,396.8 L571.1,394.7 L571.7,396.0 L572.0,395.3 L572.2,394.2 L572.8,391.6 L573.4,390.4 L573.9,389.1 L574.5,387.3 L575.0,385.6 L575.5,382.8 L576.1,381.9 L576.6,380.3 L577.0,379.0 L577.2,377.4 L577.8,376.4 L578.3,375.2 L578.9,374.4 L579.4,371.4 L580.0,371.4 L580.5,367.8 L581.0,367.3 L581.6,364.8 L582.1,363.9 L582.7,361.4 L583.2,358.9 L583.2,361.1 L583.8,362.5 L584.4,363.9 L584.9,365.8 L585.5,367.7 L586.0,368.7 L586.5,370.6 L587.0,372.0 L587.1,372.5 L587.6,374.0 L588.2,375.2 L588.8,378.1 L589.3,379.6 L589.9,381.3 L590.4,383.0 L591.0,384.9 L591.3,386.0 L591.5,385.3 L592.0,386.6 L592.6,387.7 L593.1,388.7 L593.7,389.1 L594.2,392.0 L594.8,391.0 L595.0,393.4 L595.4,391.9 L595.9,393.8 L596.5,395.4 L597.0,394.6 L597.5,394.1 L598.1,395.4 L598.6,396.0 L599.2,394.5 L599.8,396.1 L600.0,397.2 L600.3,396.6 L600.9,397.3 L601.4,398.2 L602.0,398.3 L602.5,398.6 L603.0,398.5 L603.6,397.7 L604.1,398.1 L604.7,398.0 L605.2,398.1 L605.8,398.4 L606.2,396.9 L606.4,398.3 L606.9,398.6 L607.5,397.5 L608.0,398.5 L608.5,399.0 L609.1,398.2 L609.6,400.5 L610.2,395.5 L610.8,398.0 L611.3,396.2 L611.9,399.1 L612.2,400.8 L612.4,395.2 L613.0,397.3 L613.5,397.1 L614.0,395.7 L614.6,396.0 L615.1,392.4 L615.7,395.1 L616.2,394.0 L616.8,393.0 L617.4,391.8 L617.9,392.5 L618.5,390.7 L619.0,390.8 L619.5,389.5 L620.1,387.0 L620.6,388.8 L621.2,388.4 L621.8,386.7 L622.3,384.4 L622.9,382.9 L623.4,381.3 L624.0,379.4 L624.2,378.5 L624.5,378.2 L625.0,375.7 L625.6,373.7 L626.1,372.9 L626.7,371.5 L627.2,369.6 L627.8,368.0 L628.4,365.9 L628.7,364.8 L628.9,366.0 L629.5,367.4 L630.0,369.0 L630.5,371.3 L631.1,374.3 L631.6,376.1 L632.2,377.2 L632.5,378.5 L632.8,379.6 L633.3,381.5 L633.9,384.3 L634.4,386.1 L635.0,388.0 L635.5,390.5 L636.0,390.5 L636.6,392.0 L637.1,392.4 L637.7,392.7 L638.2,394.0 L638.8,393.6 L639.4,393.0 L639.9,393.3 L640.0,394.4 L640.5,395.1 L641.0,396.0 L641.5,396.3 L642.1,397.0 L642.6,396.8 L643.2,396.0 L643.8,396.3 L644.3,395.0 L644.9,397.3 L645.4,398.2 L646.0,398.4 L646.5,397.9 L647.0,398.1 L647.6,399.4 L648.1,398.7 L648.7,399.6 L649.2,399.7 L649.8,399.5 L650.4,400.8 L650.5,398.9 L650.9,398.9 L651.5,398.1 L652.0,397.8 L652.5,399.9 L653.1,399.8 L653.6,397.7 L654.2,397.9 L654.8,398.2 L655.3,397.5 L655.9,397.6 L656.4,394.7 L657.0,395.0 L657.5,395.9 L658.0,396.6 L658.6,394.8 L659.1,393.5 L659.5,393.8 L659.7,393.2 L660.2,392.3 L660.8,394.0 L661.4,391.0 L661.9,390.9 L662.5,392.4 L663.0,390.7 L663.5,389.0 L664.1,387.3 L664.6,387.6 L665.2,388.1 L665.5,386.7 L665.8,385.4 L666.3,382.8 L666.9,380.8 L667.4,378.3 L668.0,376.3 L668.5,374.0 L669.0,371.2 L669.6,369.4 L670.1,367.1 L670.7,364.6 L671.0,363.5 L671.2,364.6 L671.8,366.9 L672.4,368.3 L672.9,370.1 L673.5,371.4 L674.0,374.4 L674.5,375.5 L674.5,375.7 L675.1,377.5 L675.6,380.1 L676.2,382.0 L676.8,384.5 L677.3,386.8 L677.9,388.9 L678.4,391.2 L679.0,393.0 L679.0,393.5 L679.5,393.0 L680.0,391.9 L680.6,393.8 L681.1,393.4 L681.7,393.3 L682.2,394.2 L682.8,395.1 L683.4,393.7 L683.5,394.9 L683.9,397.0 L684.5,397.0 L685.0,396.9 L685.5,397.9 L686.1,398.4 L686.6,399.3 L687.2,400.8 L687.8,400.7 L688.3,399.0 L688.9,402.3 L689.4,402.1 L689.5,403.9 L690.0,402.6 L690.5,403.5 L691.0,405.7 L691.6,402.3 L692.1,402.3 L692.7,402.1 L693.2,401.1 L693.8,401.7 L694.4,404.1 L694.9,403.1 L695.5,401.9 L696.0,402.4 L696.5,404.6 L697.1,403.2 L697.6,403.7 L698.2,404.5 L698.8,405.7 L699.3,406.3 L699.9,405.4 L700.4,404.6 L701.0,404.7 L701.5,406.4 L702.0,406.1 L702.6,404.3 L703.0,405.2 L703.1,405.0 L703.7,404.9 L704.2,404.4 L704.8,403.6 L705.4,404.5 L705.9,403.5 L706.5,406.5 L707.0,405.9 L707.5,404.1 L708.1,406.9 L708.6,406.5 L709.2,403.6 L709.8,407.7 L710.3,406.7 L710.9,408.1 L711.4,404.7 L712.0,406.6 L712.5,406.6 L713.0,406.5 L713.6,406.5 L714.1,407.5 L714.7,404.9 L715.2,405.3 L715.8,405.2 L716.4,406.2 L716.7,406.2 L716.9,407.2 L717.5,407.0 L718.0,406.6 L718.5,405.8 L719.1,406.0 L719.6,407.4 L720.2,407.1 L720.8,406.3 L721.3,405.8 L721.9,407.7 L722.4,405.3 L723.0,406.6 L723.5,407.0 L724.0,405.5 L724.6,406.5 L725.1,404.4 L725.7,406.6 L726.2,405.6 L726.8,403.7 L727.4,406.0 L727.9,404.2 L728.5,406.4 L729.0,404.3 L729.5,404.8 L730.1,405.2 L730.6,404.4 L731.2,405.0 L731.8,404.0 L732.3,405.2 L732.9,404.5 L733.4,404.6 L734.0,401.4 L734.5,405.4 L735.0,404.2 L735.6,402.2 L736.0,404.1 L736.1,404.2 L736.7,403.7 L737.2,400.4 L737.8,402.0 L738.4,399.1 L738.9,400.7 L739.5,396.9 L740.0,396.7 L740.5,394.5 L741.1,392.6 L741.6,393.9 L742.2,392.6 L742.8,392.1 L743.3,390.3 L743.5,388.4 L743.9,387.4 L744.4,388.7 L745.0,389.0 L745.5,389.1 L746.0,390.8 L746.6,390.8 L747.1,390.4 L747.7,391.1 L747.8,390.8 L748.2,388.8 L748.8,386.1 L749.4,383.3 L749.9,380.0 L750.5,376.9 L751.0,375.0 L751.5,372.0 L751.5,372.1 L752.1,369.0 L752.6,367.1 L753.2,364.9 L753.5,363.6 L753.8,358.3 L754.3,347.5 L754.9,336.4 L754.9,335.0 L755.4,324.7 L756.0,313.4 L756.3,306.8 L756.5,299.0 L757.0,276.4 L757.6,253.6 L757.7,250.0 L758.1,231.7 L758.7,209.0 L759.2,186.0 L759.4,180.0 L759.8,161.1 L760.3,137.0 L760.4,135.0 L760.9,119.5 L761.4,104.7 L761.5,105.9 L762.0,119.9 L762.5,133.1 L762.7,137.0 L763.0,180.0 L763.1,197.7 L763.4,250.0 L763.6,257.0 L764.2,273.4 L764.8,288.8 L765.3,304.2 L765.4,306.8 L765.9,314.8 L766.4,323.3 L767.0,332.5 L767.1,335.0 L767.5,340.0 L768.0,346.9 L768.6,353.3 L769.0,358.0 L769.1,358.8 L769.7,362.1 L770.2,364.8 L770.8,368.8 L771.4,371.6 L771.4,372.0 L771.9,377.6 L772.5,384.0 L773.0,391.0 L773.5,397.5 L774.1,403.2 L774.2,404.8 L774.6,406.5 L775.2,406.0 L775.8,406.0 L776.3,407.8 L776.9,408.9 L777.4,410.9 L778.0,411.1 L778.5,410.4 L779.0,413.6" fill="none" stroke="#ff2828" stroke-width="0.95" stroke-linejoin="round"/>
</svg>
<!-- bottom text -->
<svg class="a" style="left:0;top:470px" width="800" height="80" font-family="Liberation Sans">
<text x="9.5" y="24" font-size="10.5" text-anchor="start" fill="#1a1a1a" font-weight="normal" textLength="129" lengthAdjust="spacingAndGlyphs" xml:space="preserve" >Counts / Raman Shift (cm-1)</text>
<text x="9.5" y="44" font-size="10.5" text-anchor="start" fill="#1a1a1a" font-weight="normal" textLength="95" lengthAdjust="spacingAndGlyphs" xml:space="preserve" >File # 1 : SHANGHAI</text>
<text x="9.5" y="64" font-size="10.5" text-anchor="start" fill="#1a1a1a" font-weight="normal" xml:space="preserve" >Si</text>
<text x="789.5" y="24" font-size="10.5" text-anchor="end" fill="#1a1a1a" font-weight="normal" textLength="119" lengthAdjust="spacingAndGlyphs" xml:space="preserve" >Paged   Y-Zoom CURSOR</text>
<text x="789.5" y="44" font-size="10.5" text-anchor="end" fill="#1a1a1a" font-weight="normal" textLength="127" lengthAdjust="spacingAndGlyphs" xml:space="preserve" >6/2/15  6:11 PM  Res=None</text>
</svg>
<!-- status bar -->
<div class="a" id="status">
  <div class="a" style="left:2px;top:2px;width:22px;height:12px;border:1px solid #303030;box-shadow:inset 1px 1px 0 #f4f0e8"><div class="a" style="left:2px;top:2px;width:16px;height:7px;background:#ff0000"></div></div>
  <div class="pan" style="left:26px;width:55px"></div>
  <div class="pan" style="left:82px;width:19px"></div>
  <div class="pan" style="left:102px;width:37px"></div>
  <div class="pan" style="left:141px;width:42px"></div>
  <div class="pan" style="left:184px;width:46px"></div>
  <div class="pan" style="left:231px;width:568px"></div>
  <svg class="a" style="left:0;top:-1px" width="800" height="17" font-family="Liberation Sans">
<text x="32.1" y="12.3" font-size="9.5" text-anchor="start" fill="#202020" font-weight="normal" textLength="43.2" lengthAdjust="spacingAndGlyphs" xml:space="preserve" >SHANGHAI</text>
<text x="87.7" y="12.3" font-size="9.5" text-anchor="start" fill="#202020" font-weight="normal" textLength="7.4" lengthAdjust="spacingAndGlyphs" xml:space="preserve" >Si</text>
<text x="108.3" y="12.3" font-size="9.5" text-anchor="start" fill="#202020" font-weight="normal" textLength="23.4" lengthAdjust="spacingAndGlyphs" xml:space="preserve" >6/2/15</text>
<text x="144.7" y="12.3" font-size="9.5" text-anchor="start" fill="#202020" font-weight="normal" textLength="31.0" lengthAdjust="spacingAndGlyphs" xml:space="preserve" >Y-Zoom</text>
<text x="188.0" y="12.3" font-size="9.5" text-anchor="start" fill="#202020" font-weight="normal" textLength="35.3" lengthAdjust="spacingAndGlyphs" xml:space="preserve" >CURSOR</text>
</svg>
  <div class="a" style="left:799px;top:-1px;width:1px;height:17px;background:#202020"></div>
</div>
<!-- taskbar -->
<div class="a" id="task">
<div class="tk" style="left:1px;width:42px"><svg class="a" style="left:3px;top:3px" width="13" height="12"><path d="M4.5 1.2 Q8 0 12.2 1.5 L11.5 10.5 Q8 9 4.5 10.5 Z" fill="#101010"/><path d="M5.5 2.2 Q6.8 1.6 8 1.8 L7.8 5.5 Q6.6 5.3 5.4 5.8Z" fill="#ff1010"/><path d="M8.6 1.9 Q10 2 11.3 2.6 L11 6 Q9.8 5.5 8.4 5.5Z" fill="#10d010"/><path d="M5.3 6.4 Q6.5 5.9 7.8 6.1 L7.6 9.3 Q6.4 9.2 5.1 9.7Z" fill="#1010ff"/><path d="M8.4 6.1 Q9.8 6.2 11 6.7 L10.8 9.8 Q9.6 9.3 8.2 9.3Z" fill="#f0e010"/><path d="M0.5 4.5h4M0.5 6h4M0.5 7.5h4M0.5 9h4" stroke="#e04040" stroke-width="0.9"/><path d="M0.5 7.5h4" stroke="#fff" stroke-width="0.9"/><path d="M0.5 9h4" stroke="#3040f0" stroke-width="1.2"/></svg><svg class="a" style="left:0;top:0" width="42" height="18" font-family="Liberation Sans"><text x="17.3" y="12.2" font-size="10.5" text-anchor="start" fill="#101010" font-weight="bold" textLength="21.5" lengthAdjust="spacingAndGlyphs" xml:space="preserve" >Start</text></svg></div>
<div class="a" style="left:47px;top:4px;width:3px;height:15px;box-shadow:inset 1px 1px 0 #fff,inset -1px -1px 0 #a89c7c"></div>
<div class="a" style="left:137px;top:4px;width:3px;height:15px;box-shadow:inset 1px 1px 0 #fff,inset -1px -1px 0 #a89c7c"></div>
<svg class="a" style="left:54px;top:3px" width="72" height="16" font-family="Liberation Serif">
<text x="2" y="13.5" font-size="16" font-weight="bold" fill="#1a50d8" font-family="Liberation Sans">e</text><path d="M1.5 13.5 Q4 4 13.5 2 Q12.5 4 12 5.5" fill="none" stroke="#3070e8" stroke-width="1.4"/>
<rect x="22.5" y="8.5" width="10" height="6" fill="#f4f0d8" stroke="#705030"/><path d="M22.5 8.5 L27.5 12 L32.5 8.5" fill="none" stroke="#a08060" stroke-width="0.7"/><text x="18.5" y="10" font-size="10" font-weight="bold" fill="#1848d0" font-family="Liberation Sans">e</text><rect x="29" y="10" width="2" height="2" fill="#d02020"/>
<rect x="37.5" y="2.5" width="12" height="12" fill="#e8e4d0" stroke="#2050a0" stroke-width="1.6"/><path d="M40 11 L46.5 3.5" stroke="#f0c000" stroke-width="2.2"/><path d="M40 11 L41 12" stroke="#303030" stroke-width="1.5"/><path d="M46 3 L48 1.5" stroke="#d03030" stroke-width="1.5"/>
<circle cx="62" cy="8" r="4.8" fill="#3a80e0" stroke="#1a3080" stroke-width="0.8"/><path d="M59.5 6 Q62 4.5 64 7" fill="none" stroke="#a0d0ff" stroke-width="1"/><path d="M58 4 L62 8" stroke="#303030" stroke-width="1"/><circle cx="57.5" cy="4" r="1.2" fill="#40a0ff"/><path d="M61 12 V14.5 M58.5 14.5 H63.5" stroke="#707070" stroke-width="1.3"/>
</svg>
<div class="tk" style="left:143px;width:125px;background:#eeeae0;box-shadow:inset 1px 1px 0 #000,inset 2px 2px 0 #a89c7c,inset -1px -1px 0 #fff"><svg class="a" style="left:4px;top:3px" width="13" height="13"><rect x="0" y="0" width="12" height="12" fill="#d8d4e4"/><path d="M0.5 0V12M11.5 0V12" stroke="#5050d0"/><path d="M0 11.5H12M0 0.5H12" stroke="#4040a0"/><path d="M2 9.5H7" stroke="#d0d060" stroke-width="1.2"/><path d="M8 4.5 Q9.5 2.5 11 4.5" fill="none" stroke="#d8d040" stroke-width="1.6"/><path d="M0.8 7.5 Q3 1 4.3 1.8 Q5.5 2.5 6.8 7" fill="none" stroke="#e03838" stroke-width="1.5"/><path d="M6.8 7.2 H11.5" stroke="#f07028" stroke-width="1.3"/></svg><svg class="a" style="left:0;top:0" width="125" height="18" font-family="Liberation Sans"><text x="17.6" y="13" font-size="9.8" text-anchor="start" fill="#000" font-weight="bold" textLength="49.5" lengthAdjust="spacing" xml:space="preserve" >GRAMS/32</text></svg></div>
<div class="tk" style="left:270px;width:126px"><svg class="a" style="left:4px;top:3px" width="13" height="13"><rect x="0.5" y="1.5" width="12" height="11" fill="#c8d8c0" stroke="#404040"/><rect x="2" y="4" width="8" height="7" fill="#e0e0a0"/><rect x="1" y="2" width="2" height="10" fill="#303030"/></svg><svg class="a" style="left:0;top:0" width="126" height="18" font-family="Liberation Sans"><text x="17.8" y="13" font-size="10" text-anchor="start" fill="#000" font-weight="normal" textLength="72.5" lengthAdjust="spacingAndGlyphs" xml:space="preserve" >WiRE Video Viewer</text></svg></div>
<div class="tk" style="left:398px;width:125px"><svg class="a" style="left:3px;top:4px" width="14" height="11"><path d="M0.5 2.5h5l1 1.5h6.5v6.5h-12.5z" fill="#f0e080" stroke="#807020"/></svg><svg class="a" style="left:0;top:0" width="125" height="18" font-family="Liberation Sans"><text x="17.8" y="13" font-size="10" text-anchor="start" fill="#000" font-weight="normal" textLength="41.5" lengthAdjust="spacingAndGlyphs" xml:space="preserve" >zhangdong</text></svg></div>
<div class="a" style="left:708px;top:3px;width:92px;height:18px;box-shadow:inset 1px 1px 0 #a89c7c,inset -1px -1px 0 #fff"></div>
<svg class="a" style="left:709px;top:5px" width="44" height="14">
<rect x="2.5" y="1" width="2.5" height="4" fill="#4050e0"/><rect x="5.5" y="1.5" width="7" height="2" fill="#3040c0"/><rect x="2.5" y="5" width="9" height="7" fill="#f4f4f4" stroke="#505050" stroke-width="0.6"/><circle cx="11" cy="8.8" r="2.8" fill="#fff" stroke="#d01010" stroke-width="1.5"/><rect x="10.3" y="8.2" width="1.5" height="1.3" fill="#3050d0"/>
<polygon points="17,1.5 26,1.5 27,9 18,9" fill="#d8d8d8" stroke="#505050" stroke-width="0.8"/><rect x="18.5" y="2.5" width="3.5" height="3" fill="#e010e0"/><rect x="22" y="2.5" width="3.5" height="3" fill="#10d010"/><rect x="19" y="5.5" width="3.5" height="3" fill="#f0f010"/><rect x="22.5" y="5.5" width="3.5" height="3" fill="#1010e0"/><path d="M17 11.5 H26" stroke="#606060" stroke-width="2"/>
<rect x="29" y="1" width="3" height="10" fill="#202020"/><rect x="32.5" y="2" width="7" height="9" fill="#b8b8b8" stroke="#404040" stroke-width="0.7"/><rect x="34" y="4" width="3" height="3" fill="#e0e0a0"/><rect x="31" y="11" width="4" height="1.5" fill="#20a0a0"/>
</svg>
<svg class="a" style="left:740px;top:0" width="60" height="21" font-family="Liberation Sans"><text x="18.5" y="14.5" font-size="10" text-anchor="start" fill="#000" font-weight="normal" textLength="31" lengthAdjust="spacingAndGlyphs" xml:space="preserve" >6:25 PM</text></svg>
</div>
</body></html>
